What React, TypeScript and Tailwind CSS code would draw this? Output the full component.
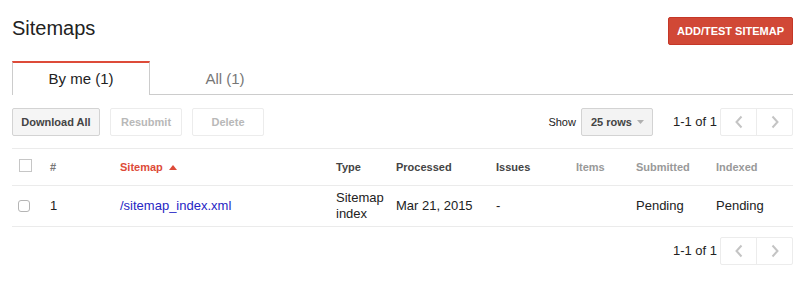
import React from 'react';

const cols = 'grid grid-cols-[38px_70px_216px_60px_100px_80px_60px_80px_77px]';

function Pager() {
  return (
    <div className="flex items-center">
      <span className="text-[13px] text-[#222] mr-[3px]">1-1 of 1</span>
      <div className="flex h-[28px] border border-[#ececec] rounded-[2px]">
        <div className="w-[36px] flex items-center justify-center border-r border-[#ececec]">
          <svg width="10" height="14" viewBox="0 0 10 14"><path d="M7.5 1.5 L2.5 7 L7.5 12.5" fill="none" stroke="#c4c4c4" strokeWidth="2" /></svg>
        </div>
        <div className="w-[35px] flex items-center justify-center">
          <svg width="10" height="14" viewBox="0 0 10 14"><path d="M2.5 1.5 L7.5 7 L2.5 12.5" fill="none" stroke="#c4c4c4" strokeWidth="2" /></svg>
        </div>
      </div>
    </div>
  );
}

export default function App() {
  return (
    <div className="w-[804px] h-[284px] bg-white px-[12px] pr-[11px] font-['Liberation_Sans',Arial,sans-serif] text-[#222]">
      <div className="flex items-start justify-between pt-[17px]">
        <h1 className="text-[20px] leading-[24px] mt-[-1px] text-[#222]">Sitemaps</h1>
        <button className="h-[28px] px-[8px] bg-[#d14836] text-white text-[11px] font-bold rounded-[2px] border border-[#c53727]">ADD/TEST SITEMAP</button>
      </div>

      <div className="flex mt-[16px] border-b border-[#cccccc] h-[34px]">
        <div className="w-[138px] border-t-[2px] border-t-[#dd4b39] border-x border-x-[#cccccc] bg-white mb-[-1px] flex items-center justify-center text-[15px] text-[#222] pt-[1px]">By me (1)</div>
        <div className="w-[150px] flex items-center justify-center text-[15px] text-[#777] pt-[3px]">All (1)</div>
      </div>

      <div className="flex items-center mt-[13px] h-[28px]">
        <button className="h-[28px] w-[88px] bg-[#f5f5f5] border border-[#d3d3d3] rounded-[2px] text-[11px] font-bold text-[#444]">Download All</button>
        <button className="h-[28px] w-[72px] ml-[10px] bg-white border border-[#ececec] rounded-[2px] text-[11px] font-bold text-[#b8b8b8]">Resubmit</button>
        <button className="h-[28px] w-[72px] ml-[10px] bg-white border border-[#ececec] rounded-[2px] text-[11px] font-bold text-[#b8b8b8]">Delete</button>
        <div className="flex-1" />
        <span className="text-[11px] text-[#222] mr-[5px]">Show</span>
        <div className="h-[28px] w-[72px] bg-[#f3f3f3] border border-[#d3d3d3] rounded-[2px] flex items-center pl-[9px] text-[11px] font-bold text-[#444]">
          25 rows
          <svg className="ml-[5px]" width="7" height="4" viewBox="0 0 7 4"><path d="M0 0 H7 L3.5 4 Z" fill="#b0b0b0" /></svg>
        </div>
        <div className="ml-[20px]"><Pager /></div>
      </div>

      <div className="mt-[12px] border-t border-[#ebebeb]">
        <div className={`${cols} h-[37px] items-center text-[11px] font-bold border-b border-[#ebebeb]`}>
          <div className="pl-[7px] pb-[3px]"><div className="w-[13px] h-[13px] border border-[#c6c6c6] bg-white" /></div>
          <div className="text-[#777]">#</div>
          <div className="text-[#dd4b39] flex items-center">Sitemap
            <svg className="ml-[6px]" width="8" height="5" viewBox="0 0 8 5"><path d="M0 5 L4 0 L8 5 Z" fill="#dd4b39" /></svg>
          </div>
          <div className="text-[#444]">Type</div>
          <div className="text-[#444]">Processed</div>
          <div className="text-[#444]">Issues</div>
          <div className="text-[#999]">Items</div>
          <div className="text-[#999]">Submitted</div>
          <div className="text-[#999]">Indexed</div>
        </div>
        <div className={`${cols} h-[41px] items-center text-[13px] border-b border-[#ebebeb]`}>
          <div className="pl-[6px]"><div className="w-[12px] h-[12px] border border-[#b5b5b5] rounded-[3px] bg-white" /></div>
          <div>1</div>
          <div className="text-[#2626c4]">/sitemap_index.xml</div>
          <div className="leading-[16px]">Sitemap<br />index</div>
          <div>Mar 21, 2015</div>
          <div>-</div>
          <div />
          <div>Pending</div>
          <div>Pending</div>
        </div>
      </div>

      <div className="flex justify-end mt-[10px]">
        <Pager />
      </div>
    </div>
  );
}
